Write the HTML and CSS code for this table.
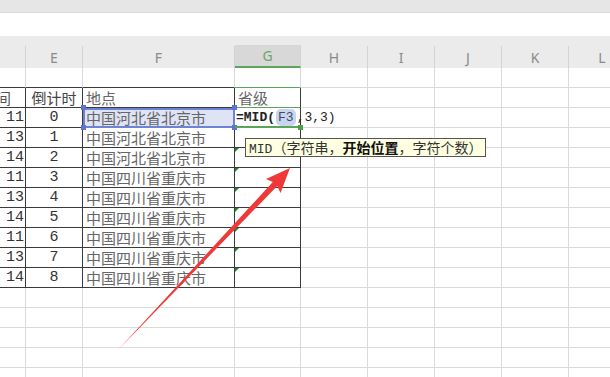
FILE: index.html
```html
<!DOCTYPE html>
<html lang="zh-CN">
<head>
<meta charset="utf-8">
<title>MID</title>
<link rel="stylesheet" href="styles.css">
</head>
<body>
<div class="topbar"></div>
<div class="fbar"></div>
<div class="colhead">
  <span></span><span>E</span><span>F</span><span class="sel">G</span><span>H</span><span>I</span><span>J</span><span>K</span><span>L</span>
</div>
<div class="sheet">
  <div class="row"><div class="c tb"></div><div class="c tb"></div><div class="c tb"></div><div class="c tb g2top"></div><div class="c"></div><div class="c"></div><div class="c"></div><div class="c"></div><div class="c"></div></div>
  <div class="row"><div class="c t"><span class="cut">时间</span></div><div class="c t ctr">倒计时</div><div class="c t txt">地点</div><div class="c t txt gh">省级</div><div class="c"></div><div class="c"></div><div class="c"></div><div class="c"></div><div class="c"></div></div>
  <div class="row"><div class="c t num">11</div><div class="c t ctr num">0</div><div class="c t txt fsel">中国河北省北京市<i class="h h1"></i><i class="h h2"></i><i class="h h3"></i><i class="h h4"></i></div><div class="c t edit"><b>=MID(</b><span class="ref">F3</span>,3<span class="caret"></span>,3)<i class="gh4"></i></div><div class="c"></div><div class="c"></div><div class="c"></div><div class="c"></div><div class="c"></div></div>
  <div class="row"><div class="c t num">13</div><div class="c t ctr num">1</div><div class="c t txt">中国河北省北京市</div><div class="c t"></div><div class="c"></div><div class="c"></div><div class="c"></div><div class="c"></div><div class="c"></div></div>
  <div class="row"><div class="c t num">14</div><div class="c t ctr num">2</div><div class="c t txt">中国河北省北京市</div><div class="c t warn"></div><div class="c"></div><div class="c"></div><div class="c"></div><div class="c"></div><div class="c"></div></div>
  <div class="row"><div class="c t num">11</div><div class="c t ctr num">3</div><div class="c t txt">中国四川省重庆市</div><div class="c t warn"></div><div class="c"></div><div class="c"></div><div class="c"></div><div class="c"></div><div class="c"></div></div>
  <div class="row"><div class="c t num">13</div><div class="c t ctr num">4</div><div class="c t txt">中国四川省重庆市</div><div class="c t warn"></div><div class="c"></div><div class="c"></div><div class="c"></div><div class="c"></div><div class="c"></div></div>
  <div class="row"><div class="c t num">14</div><div class="c t ctr num">5</div><div class="c t txt">中国四川省重庆市</div><div class="c t warn"></div><div class="c"></div><div class="c"></div><div class="c"></div><div class="c"></div><div class="c"></div></div>
  <div class="row"><div class="c t num">11</div><div class="c t ctr num">6</div><div class="c t txt">中国四川省重庆市</div><div class="c t warn"></div><div class="c"></div><div class="c"></div><div class="c"></div><div class="c"></div><div class="c"></div></div>
  <div class="row"><div class="c t num">13</div><div class="c t ctr num">7</div><div class="c t txt">中国四川省重庆市</div><div class="c t warn"></div><div class="c"></div><div class="c"></div><div class="c"></div><div class="c"></div><div class="c"></div></div>
  <div class="row"><div class="c t num">14</div><div class="c t ctr num">8</div><div class="c t txt">中国四川省重庆市</div><div class="c t warn"></div><div class="c"></div><div class="c"></div><div class="c"></div><div class="c"></div><div class="c"></div></div>
  <div class="row"><div class="c"></div><div class="c"></div><div class="c"></div><div class="c"></div><div class="c"></div><div class="c"></div><div class="c"></div><div class="c"></div><div class="c"></div></div>
  <div class="row"><div class="c"></div><div class="c"></div><div class="c"></div><div class="c"></div><div class="c"></div><div class="c"></div><div class="c"></div><div class="c"></div><div class="c"></div></div>
  <div class="row"><div class="c"></div><div class="c"></div><div class="c"></div><div class="c"></div><div class="c"></div><div class="c"></div><div class="c"></div><div class="c"></div><div class="c"></div></div>
  <div class="row"><div class="c"></div><div class="c"></div><div class="c"></div><div class="c"></div><div class="c"></div><div class="c"></div><div class="c"></div><div class="c"></div><div class="c"></div></div>
  <div class="row"><div class="c"></div><div class="c"></div><div class="c"></div><div class="c"></div><div class="c"></div><div class="c"></div><div class="c"></div><div class="c"></div><div class="c"></div></div>
</div>
<div class="tip"><span class="mono">MID</span>（字符串，<b>开始位置</b>，字符个数）</div>
<svg class="arrow" width="610" height="377" viewBox="0 0 610 377">
  <polygon points="118,350 272.8,182 266,179 290,168 280.5,193 277.2,186" fill="#ef3838"/>
</svg>
</body>
</html>
```
FILE: styles.css
```css
* { box-sizing: border-box; }
:root { --cols: 26px 57px 152px 66px 67px 67px 67px 67px 67px; }
body {
  margin: 0;
  width: 610px;
  height: 377px;
  overflow: hidden;
  background: #fff;
  position: relative;
  font-family: "Noto Sans CJK SC", sans-serif;
}
.topbar { height: 13px; background: #e6e6e6; border-bottom: 1px solid #dadada; }
.fbar { height: 23px; background: #fff; }
.colhead {
  display: grid;
  grid-template-columns: var(--cols);
  height: 32px;
  background: #ebebeb;
  align-items: end;
}
.colhead span {
  height: 22px;
  border-right: 1px solid #d3d3d3;
  display: flex;
  align-items: center;
  justify-content: center;
  font: 14px "Noto Sans", sans-serif;
  color: #8a8a8a;
}
.colhead .sel {
  height: 23px;
  background: #d8d8d8;
  color: #6aa66a;
  border-bottom: 2px solid #5ba65b;
}
.row {
  display: grid;
  grid-template-columns: var(--cols);
  height: 20px;
}
.c {
  border-right: 1px solid #dadada;
  border-bottom: 1px solid #dadada;
  font-size: 15px;
  line-height: 19px;
  white-space: nowrap;
  overflow: hidden;
  color: #444;
  position: relative;
}
.t { border-color: #3a3a3a; }
.tb { border-bottom-color: #3a3a3a; }
.g2top { border-bottom: 1px solid #5aa55a; }
.gh { border-bottom-color: #5aa55a; }
.cut { margin-left: -19px; color: #555; }
.num { font-family: "Liberation Mono", monospace; text-align: right; padding-right: 1px; color: #333; }
.ctr { text-align: center; padding-right: 0; }
.txt { padding-left: 3px; color: #666; }
.fsel {
  background: #dee4f5;
  outline: 2px solid #6d84d6;
  outline-offset: -2px;
  overflow: visible;
  z-index: 1;
}
.h {
  position: absolute;
  width: 5px;
  height: 5px;
  background: #5b74d2;
}
.h1 { left: -2px; top: -3px; }
.h2 { right: -3px; top: -3px; }
.h3 { left: -2px; bottom: -3px; }
.h4 { right: -3px; bottom: -3px; }
.edit {
  overflow: visible;
  z-index: 2;
  font: 13px/17px "Liberation Mono", monospace;
  color: #222;
  padding-left: 1px;
  border-bottom: 2px solid #5aa55a;
  display: flex;
  align-items: center;
}
.edit b { font-weight: bold; }
.ref {
  background: #c9d5ee;
  border-radius: 5px;
  padding: 0 2px;
  margin: 0 1px;
  color: #3c4a66;
}
.caret {
  display: inline-block;
  width: 1px;
  height: 15px;
  background: #111;
}
.gh4 {
  position: absolute;
  right: -3px;
  bottom: -4px;
  width: 5px;
  height: 5px;
  background: #4e9e4e;
}
.warn::before {
  content: "";
  position: absolute;
  left: 0;
  top: 0;
  border-top: 4px solid #1d8a2a;
  border-right: 4px solid transparent;
}
.tip {
  position: absolute;
  left: 245px;
  top: 138px;
  height: 19px;
  padding: 0 3px 0 3px;
  background: #ffffe1;
  border: 1px solid #555;
  font-size: 14px;
  line-height: 17px;
  color: #333;
  white-space: nowrap;
  z-index: 3;
}
.tip b { font-weight: bold; color: #111; }
.mono { font-family: "Liberation Mono", monospace; font-size: 13px; }
.arrow {
  position: absolute;
  left: 0;
  top: 0;
  pointer-events: none;
  z-index: 4;
}
```
